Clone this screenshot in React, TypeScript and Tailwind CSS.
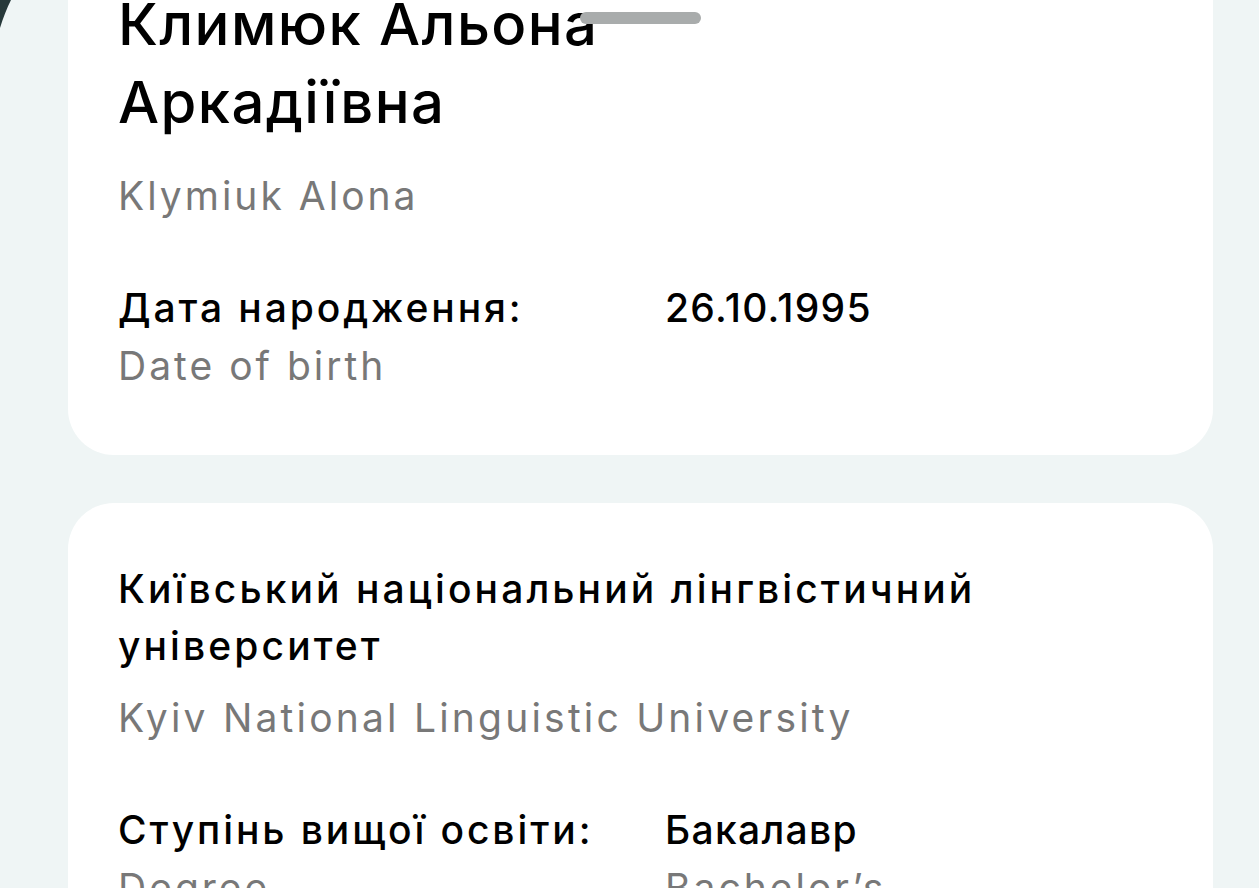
const font = { fontFamily: "Inter, 'Noto Sans', sans-serif" };

function Row({ label, labelEn, value, valueEn }: { label: string; labelEn: string; value: string; valueEn?: string }) {
  return (
    <div className="grid grid-cols-[547px_1fr]">
      <div>
        <div className="text-[39px] leading-[58px] font-medium tracking-[2.9px] text-black">{label}</div>
        <div className="text-[39px] leading-[58px] tracking-[3px] text-[#787878]">{labelEn}</div>
      </div>
      <div>
        <div className="text-[39px] leading-[58px] font-medium tracking-[1.3px] text-black">{value}</div>
        {valueEn && <div className="text-[39px] leading-[58px] tracking-[3px] text-[#787878]">{valueEn}</div>}
      </div>
    </div>
  );
}

export default function App() {
  return (
    <div className="relative min-h-screen overflow-hidden bg-[#eff5f5] px-[68px]" style={font}>
      {/* dark frame corner peeking in at the top-left */}
      <svg className="absolute left-0 top-0" width="12" height="30" viewBox="0 0 12 30">
        <path d="M0 0 H11 C7 8 3 18 0 28 Z" fill="#27393a" />
      </svg>
      {/* drag handle */}
      <div className="absolute left-[580px] top-[12px] z-10 h-[12px] w-[121px] rounded-full bg-[#a9acac]" />

      <div className="w-[1145px] rounded-b-[46px] bg-white px-[50px] pb-[60px]">
        <h1 className="-mt-[15px] text-[58px] leading-[78px] font-medium tracking-[1.4px] text-black">
          Климюк Альона
          <br />
          Аркадіївна
        </h1>
        <div className="mt-[26px] text-[39px] leading-[58px] tracking-[3px] text-[#787878]">Klymiuk Alona</div>
        <div className="mt-[54px]">
          <Row label="Дата народження:" labelEn="Date of birth" value="26.10.1995" />
        </div>
      </div>

      <div className="mt-[48px] w-[1145px] rounded-t-[46px] bg-white px-[50px] pt-[57px] pb-[60px]">
        <div className="text-[39px] leading-[57px] font-medium tracking-[3.1px] text-black">
          Київський національний лінгвістичний
          <br />
          університет
        </div>
        <div className="mt-[15px] text-[39px] leading-[58px] tracking-[3.2px] text-[#787878]">Kyiv National Linguistic University</div>
        <div className="mt-[54px]">
          <Row label="Ступінь вищої освіти:" labelEn="Degree" value="Бакалавр" valueEn="Bachelor’s" />
        </div>
      </div>
    </div>
  );
}
